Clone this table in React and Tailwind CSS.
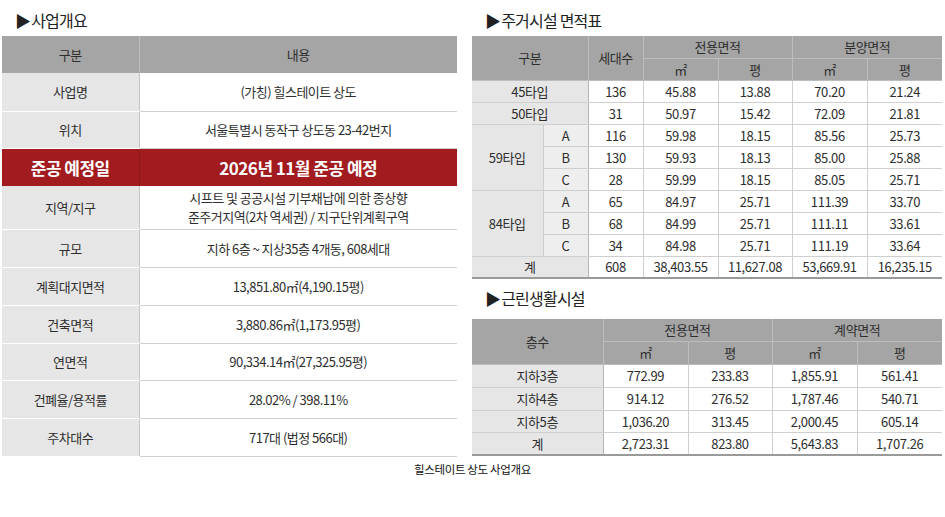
import React from "react";

const overview = [
  { label: "사업명", value: "(가칭) 힐스테이트 상도", h: "h-[38px]" },
  { label: "위치", value: "서울특별시 동작구 상도동 23-42번지", h: "h-[37px]" },
  { label: "준공 예정일", value: "2026년 11월 준공 예정", h: "h-[38px]", red: true },
  {
    label: "지역/지구",
    value: ["시프트 및 공공시설 기부채납에 의한 종상향", "준주거지역(2차 역세권) / 지구단위계획구역"],
    h: "h-[43px]",
  },
  { label: "규모", value: "지하 6층 ~ 지상35층 4개동, 608세대", h: "h-[38px]" },
  { label: "계획대지면적", value: "13,851.80㎡(4,190.15평)", h: "h-[38px]" },
  { label: "건축면적", value: "3,880.86㎡(1,173.95평)", h: "h-[38px]" },
  { label: "연면적", value: "90,334.14㎡(27,325.95평)", h: "h-[37px]" },
  { label: "건폐율/용적률", value: "28.02% / 398.11%", h: "h-[38px]" },
  { label: "주차대수", value: "717대 (법정 566대)", h: "h-[38px]" },
];

const housing = [
  { type: "45타입", n: "136", v: ["45.88", "13.88", "70.20", "21.24"] },
  { type: "50타입", n: "31", v: ["50.97", "15.42", "72.09", "21.81"] },
  { type: "59타입", sub: "A", span: 3, n: "116", v: ["59.98", "18.15", "85.56", "25.73"] },
  { sub: "B", n: "130", v: ["59.93", "18.13", "85.00", "25.88"] },
  { sub: "C", n: "28", v: ["59.99", "18.15", "85.05", "25.71"] },
  { type: "84타입", sub: "A", span: 3, n: "65", v: ["84.97", "25.71", "111.39", "33.70"] },
  { sub: "B", n: "68", v: ["84.99", "25.71", "111.11", "33.61"] },
  { sub: "C", n: "34", v: ["84.98", "25.71", "111.19", "33.64"] },
  { type: "계", n: "608", v: ["38,403.55", "11,627.08", "53,669.91", "16,235.15"] },
];

const retail = [
  { floor: "지하3층", v: ["772.99", "233.83", "1,855.91", "561.41"], h: "h-[23px]" },
  { floor: "지하4층", v: ["914.12", "276.52", "1,787.46", "540.71"], h: "h-[23px]" },
  { floor: "지하5층", v: ["1,036.20", "313.45", "2,000.45", "605.14"], h: "h-[22px]" },
  { floor: "계", v: ["2,723.31", "823.80", "5,643.83", "1,707.26"], h: "h-[23px]" },
];

const Title = ({ children, className }) => (
  <div className={`flex items-center pl-[13px] text-[16px] leading-none tracking-[-0.05em] text-[#222] ${className}`}>
    <span className="mr-[1px]">▶</span>
    {children}
  </div>
);

const hd = "border border-[#bdbdbd] bg-[#a5a5a5] p-0 text-center font-normal text-[#2e2e2e]";
const gray = "border border-[#cfcfcf] bg-[#e6e6e6] p-0 text-center";
const cell = "border border-[#cfcfcf] bg-white p-0 text-center";

export default function App() {
  return (
    <div className="w-[945px] h-[517px] bg-white font-['Noto_Sans_CJK_KR',sans-serif] text-[#2e2e2e]">
      <div className="flex gap-[15px]">
        {/* 사업개요 */}
        <div className="ml-[2px] w-[455px]">
          <Title className="h-[36px] pt-[4px]">사업개요</Title>
          <table className="w-[455px] table-fixed border-collapse text-[13px] leading-none tracking-[-0.04em]">
            <colgroup>
              <col className="w-[137px]" />
              <col className="w-[318px]" />
            </colgroup>
            <thead>
              <tr className="h-[37px]">
                <th className="bg-[#a5a5a5] border-r border-[#bdbdbd] p-0 font-normal text-[#2e2e2e]">구분</th>
                <th className="bg-[#a5a5a5] p-0 font-normal text-[#2e2e2e]">내용</th>
              </tr>
            </thead>
            <tbody>
              {overview.map((row) =>
                row.red ? (
                  <tr key={row.label} className={row.h}>
                    <td className="bg-[#a11b1f] border-r border-[#8e171b] p-0 text-center text-[17px] font-bold text-white">
                      {row.label}
                    </td>
                    <td className="bg-[#a11b1f] p-0 text-center text-[17px] font-bold text-white">{row.value}</td>
                  </tr>
                ) : (
                  <tr key={row.label} className={row.h}>
                    <td className="bg-[#e6e6e6] border-b border-r border-b-white border-r-[#c4c4c4] p-0 text-center">
                      {row.label}
                    </td>
                    <td className="border-b border-[#cfcfcf] bg-white p-0 text-center leading-[19px]">
                      {Array.isArray(row.value)
                        ? row.value.map((line) => <div key={line}>{line}</div>)
                        : row.value}
                    </td>
                  </tr>
                )
              )}
            </tbody>
          </table>
          <div className="mt-[7px] text-center text-[11.5px] leading-none tracking-[-0.03em] text-[#111] w-[941px]">
            힐스테이트 상도 사업개요
          </div>
        </div>

        {/* 주거시설 / 근린생활시설 */}
        <div className="w-[470px]">
          <Title className="h-[36px] pt-[4px]">주거시설 면적표</Title>
          <table className="w-[470px] table-fixed border-collapse border-b-2 border-b-[#9a9a9a] text-[13px] leading-none tracking-[-0.03em]">
            <colgroup>
              <col className="w-[71px]" />
              <col className="w-[45px]" />
              <col className="w-[55px]" />
              <col className="w-[75px]" />
              <col className="w-[74px]" />
              <col className="w-[75px]" />
              <col className="w-[75px]" />
            </colgroup>
            <thead>
              <tr className="h-[22px]">
                <th colSpan={2} rowSpan={2} className={`${hd} border-l-0 border-t-0`}>구분</th>
                <th rowSpan={2} className={`${hd} border-t-0`}>세대수</th>
                <th colSpan={2} className={`${hd} border-t-0`}>전용면적</th>
                <th colSpan={2} className={`${hd} border-t-0 border-r-0`}>분양면적</th>
              </tr>
              <tr className="h-[22px]">
                <th className={hd}>㎡</th>
                <th className={hd}>평</th>
                <th className={hd}>㎡</th>
                <th className={`${hd} border-r-0`}>평</th>
              </tr>
            </thead>
            <tbody>
              {housing.map((row, i) => (
                <tr key={i} className="h-[22px]">
                  {row.type && !row.sub && (
                    <td colSpan={2} className={`${gray} border-l-0 border-r-[#b5b5b5]`}>{row.type}</td>
                  )}
                  {row.type && row.sub && (
                    <td rowSpan={row.span} className={`${gray} border-l-0`}>{row.type}</td>
                  )}
                  {row.sub && (
                    <td className="border border-[#cfcfcf] border-r-[#b5b5b5] bg-[#eeeeee] p-0 text-center">{row.sub}</td>
                  )}
                  <td className={cell}>{row.n}</td>
                  {row.v.map((x, j) => (
                    <td key={j} className={`${cell} ${j === 3 ? "border-r-0" : ""}`}>{x}</td>
                  ))}
                </tr>
              ))}
            </tbody>
          </table>

          <Title className="h-[40px] pb-[2px]">근린생활시설</Title>
          <table className="w-[470px] table-fixed border-collapse border-b-2 border-b-[#9a9a9a] text-[13px] leading-none tracking-[-0.03em]">
            <colgroup>
              <col className="w-[131px]" />
              <col className="w-[85px]" />
              <col className="w-[84px]" />
              <col className="w-[85px]" />
              <col className="w-[85px]" />
            </colgroup>
            <thead>
              <tr className="h-[22px]">
                <th rowSpan={2} className={`${hd} border-l-0 border-t-0`}>층수</th>
                <th colSpan={2} className={`${hd} border-t-0`}>전용면적</th>
                <th colSpan={2} className={`${hd} border-t-0 border-r-0`}>계약면적</th>
              </tr>
              <tr className="h-[23px]">
                <th className={hd}>㎡</th>
                <th className={hd}>평</th>
                <th className={hd}>㎡</th>
                <th className={`${hd} border-r-0`}>평</th>
              </tr>
            </thead>
            <tbody>
              {retail.map((row) => (
                <tr key={row.floor} className={row.h}>
                  <td className={`${gray} border-l-0 border-r-[#b5b5b5]`}>{row.floor}</td>
                  {row.v.map((x, j) => (
                    <td key={j} className={`${cell} ${j === 3 ? "border-r-0" : ""}`}>{x}</td>
                  ))}
                </tr>
              ))}
            </tbody>
          </table>
        </div>
      </div>
    </div>
  );
}
